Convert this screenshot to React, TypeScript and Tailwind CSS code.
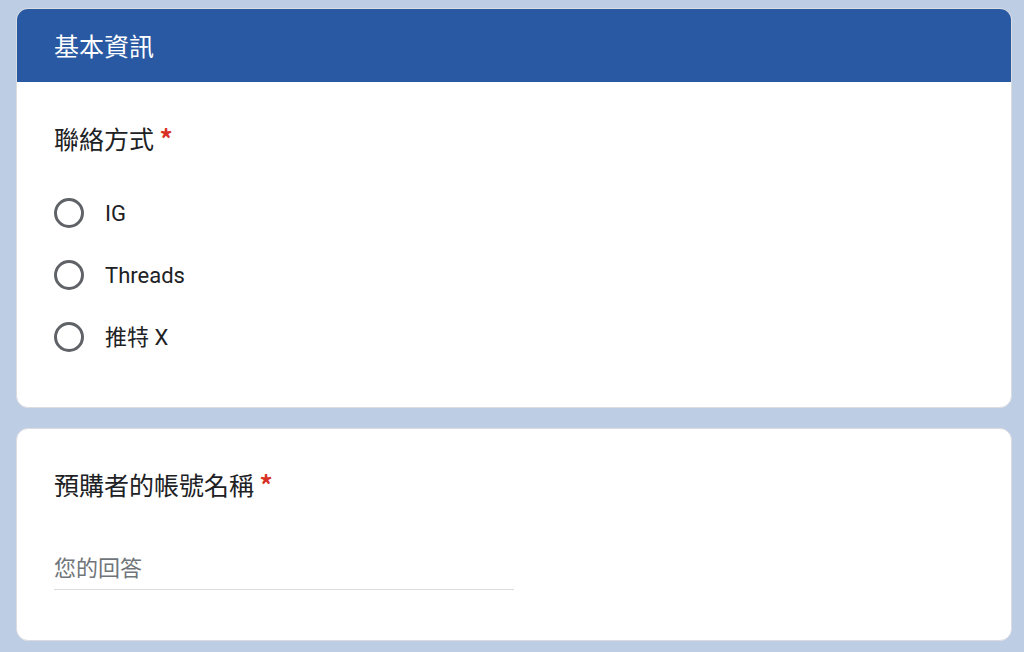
export default function App() {
  const options = ['IG', 'Threads', '推特 X'];

  return (
    <div className="min-h-[652px] bg-[#bdcde4] pt-[8px] pb-[12px] font-['Roboto','Noto_Sans_CJK_TC',sans-serif]">
      <div className="ml-[16px] w-[996px] flex flex-col gap-[20px]">
        <section className="bg-white rounded-[12px] border border-[#dadce0] overflow-hidden">
          <div className="bg-[#2a59a3] h-[74px] -mx-px -mt-px flex items-center px-[38px]">
            <h1 className="text-white text-[25px] leading-[36px] font-['Noto_Sans_CJK_TC',sans-serif]">基本資訊</h1>
          </div>
          <div className="px-[37px] pt-[38px] pb-[39px]">
            <h2 className="text-[25px] leading-[36px] text-[#202124] font-['Noto_Sans_CJK_TC',sans-serif]">
              聯絡方式 <span className="text-[#d93025] text-[26px] font-bold">*</span>
            </h2>
            <div className="mt-[26px] flex flex-col">
              {options.map((opt) => (
                <label key={opt} className="h-[62px] flex items-center gap-[21px] cursor-pointer">
                  <span className="w-[30px] h-[30px] rounded-full border-[3px] border-[#5f6368] shrink-0" />
                  <span className="text-[22px] text-[#202124] font-['Roboto','Noto_Sans_CJK_TC',sans-serif]">{opt}</span>
                </label>
              ))}
            </div>
          </div>
        </section>

        <section className="bg-white rounded-[12px] border border-[#dadce0] px-[37px] pt-[37px] pb-[50px]">
          <h2 className="text-[25px] leading-[36px] text-[#202124] font-['Noto_Sans_CJK_TC',sans-serif]">
            預購者的帳號名稱 <span className="text-[#d93025] text-[26px] font-bold">*</span>
          </h2>
          <div className="mt-[49px] w-[460px] border-b border-[#dadce0] pb-[8px]">
            <span className="block text-[22px] leading-[30px] text-[#70757a] font-['Noto_Sans_CJK_TC',sans-serif]">您的回答</span>
          </div>
        </section>
      </div>
    </div>
  );
}
